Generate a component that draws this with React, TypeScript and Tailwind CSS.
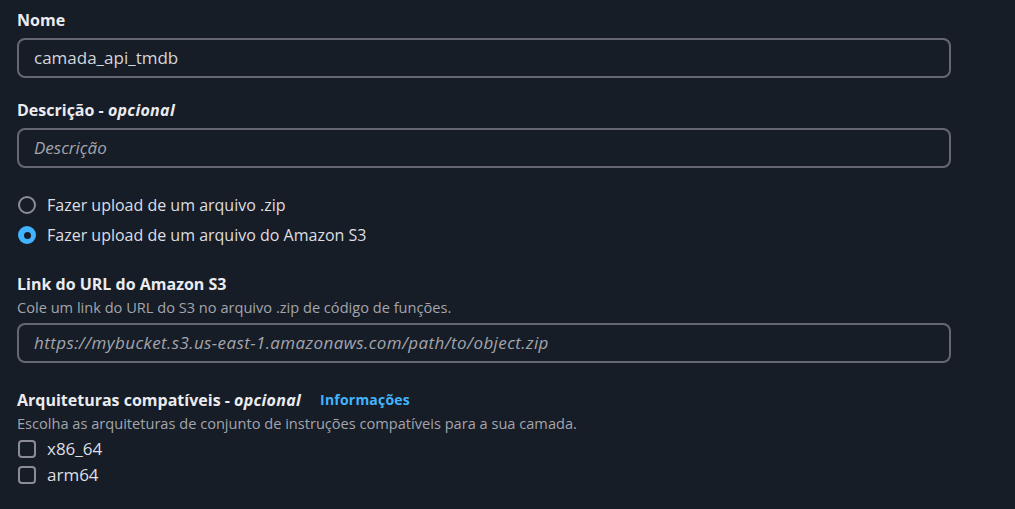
const Field = ({ value, placeholder, wide }: { value?: string; placeholder?: string; wide?: boolean }) => (
  <div className="h-10 w-[934px] rounded-lg border-2 border-[#656871] flex items-center px-[15px] text-[17px]">
    {value ? (
      <span className="text-[#d5d6db]">{value}</span>
    ) : (
      <span className={wide ? "italic text-[#a4a4ad] tracking-[0.4px]" : "italic text-[#a4a4ad]"}>
        {placeholder}
      </span>
    )}
  </div>
);

const Radio = ({ checked, label }: { checked?: boolean; label: string }) => (
  <div className="flex items-center h-6 gap-[11px]">
    {checked ? (
      <span className="w-[18px] h-[18px] ml-[1px] rounded-full bg-[#42b4ff] flex items-center justify-center">
        <span className="w-[7px] h-[7px] rounded-full bg-[#161d26]" />
      </span>
    ) : (
      <span className="w-[18px] h-[18px] ml-[1px] rounded-full border-2 border-[#8c8c94]" />
    )}
    <span className="text-[16px] text-[#dedee3]">{label}</span>
  </div>
);

const Check = ({ label }: { label: string }) => (
  <div className="flex items-center h-[26px] gap-[11px]">
    <span className="w-[18px] h-[18px] ml-[1px] rounded-[4px] border-2 border-[#8c8c94]" />
    <span className="text-[17px] text-[#dedee3]">{label}</span>
  </div>
);

export default function App() {
  return (
    <div
      className="w-[1015px] h-[509px] bg-[#161d26] overflow-hidden px-[17px] pt-[10px]"
      style={{ fontFamily: "'Open Sans', 'Noto Sans', sans-serif" }}
    >
      <div className="flex flex-col">
        <div className="h-5 leading-5 text-[16px] font-bold text-[#ebebf0]">Nome</div>
        <div className="mt-2">
          <Field value="camada_api_tmdb" />
        </div>

        <div className="mt-[22px] h-5 leading-5 text-[16px] font-bold text-[#ebebf0]">
          Descrição - <span className="italic tracking-[0.3px]">opcional</span>
        </div>
        <div className="mt-2">
          <Field placeholder="Descrição" />
        </div>

        <div className="mt-[25px] flex flex-col gap-[6px]">
          <Radio label="Fazer upload de um arquivo .zip" />
          <Radio checked label="Fazer upload de um arquivo do Amazon S3" />
        </div>

        <div className="mt-[27px] h-5 leading-5 text-[16px] font-bold text-[#ebebf0]">
          Link do URL do Amazon S3
        </div>
        <div className="mt-[3px] h-5 leading-5 text-[14.6px] text-[#a4a4ad]">
          Cole um link do URL do S3 no arquivo .zip de código de funções.
        </div>
        <div className="mt-[6px]">
          <Field wide placeholder="https://mybucket.s3.us-east-1.amazonaws.com/path/to/object.zip" />
        </div>

        <div className="mt-[27px] h-5 leading-5 flex items-center gap-[19px]">
          <span className="text-[16px] font-bold text-[#ebebf0]">
            Arquiteturas compatíveis - <span className="italic tracking-[0.3px]">opcional</span>
          </span>
          <span className="text-[14px] font-bold text-[#42b4ff] tracking-[0.2px]">Informações</span>
        </div>
        <div className="mt-[3px] h-5 leading-5 text-[14.6px] text-[#a4a4ad]">
          Escolha as arquiteturas de conjunto de instruções compatíveis para a sua camada.
        </div>
        <div className="mt-[3px] flex flex-col">
          <Check label="x86_64" />
          <Check label="arm64" />
        </div>
      </div>
    </div>
  );
}
